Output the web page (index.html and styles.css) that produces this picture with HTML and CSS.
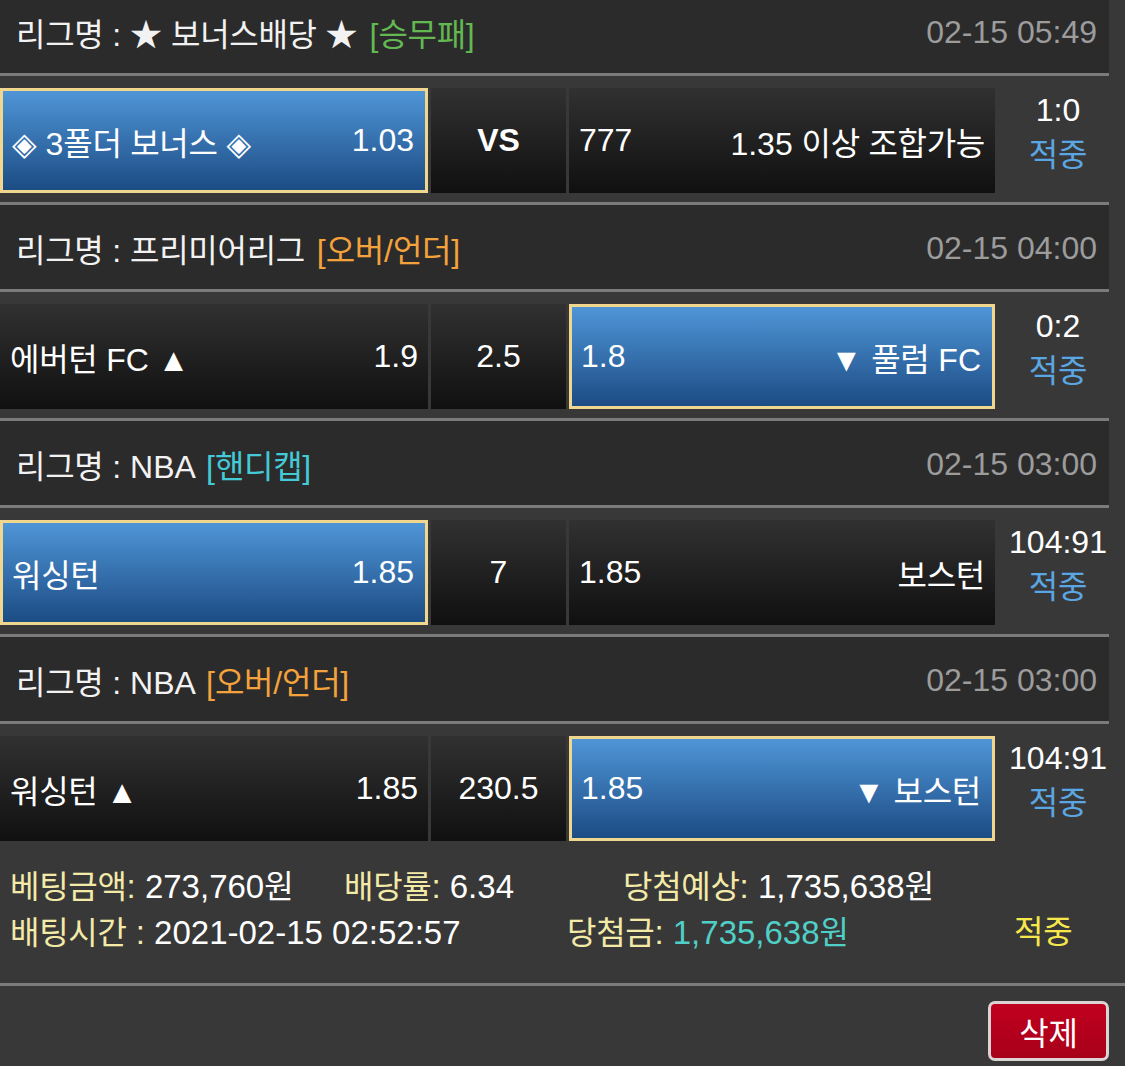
FILE: index.html
```html
<!DOCTYPE html>
<html lang="ko">
<head>
<meta charset="utf-8">
<title>배팅내역</title>
<link rel="stylesheet" href="styles.css">
</head>
<body>
<div class="slip">
  <div class="game">
    <div class="league">
      <span class="name"><span class="k">리그명</span> : ★ <span class="k">보너스배당</span> ★ <span class="tag green">[<span class="k">승무패</span>]</span></span>
      <span class="date">02-15 05:49</span>
    </div>
    <div class="match">
      <div class="cell sel"><span>◈ 3<span class="k">폴더 보너스</span> ◈</span><span>1.03</span></div>
      <div class="cell mid"><b>VS</b></div>
      <div class="cell"><span>777</span><span>1.35 <span class="k">이상 조합가능</span></span></div>
      <div class="score"><div>1:0</div><div class="hit k">적중</div></div>
    </div>
  </div>
  <div class="game">
    <div class="league">
      <span class="name"><span class="k">리그명</span> : <span class="k">프리미어리그</span> <span class="tag orange">[<span class="k">오버</span>/<span class="k">언더</span>]</span></span>
      <span class="date">02-15 04:00</span>
    </div>
    <div class="match">
      <div class="cell"><span><span class="k">에버턴</span> FC ▲</span><span>1.9</span></div>
      <div class="cell mid">2.5</div>
      <div class="cell sel"><span>1.8</span><span>▼ <span class="k">풀럼</span> FC</span></div>
      <div class="score"><div>0:2</div><div class="hit k">적중</div></div>
    </div>
  </div>
  <div class="game">
    <div class="league">
      <span class="name"><span class="k">리그명</span> : NBA <span class="tag cyan">[<span class="k">핸디캡</span>]</span></span>
      <span class="date">02-15 03:00</span>
    </div>
    <div class="match">
      <div class="cell sel"><span class="k">워싱턴</span><span>1.85</span></div>
      <div class="cell mid">7</div>
      <div class="cell"><span>1.85</span><span class="k">보스턴</span></div>
      <div class="score"><div>104:91</div><div class="hit k">적중</div></div>
    </div>
  </div>
  <div class="game last">
    <div class="league">
      <span class="name"><span class="k">리그명</span> : NBA <span class="tag orange">[<span class="k">오버</span>/<span class="k">언더</span>]</span></span>
      <span class="date">02-15 03:00</span>
    </div>
    <div class="match">
      <div class="cell"><span><span class="k">워싱턴</span> ▲</span><span>1.85</span></div>
      <div class="cell mid">230.5</div>
      <div class="cell sel"><span>1.85</span><span>▼ <span class="k">보스턴</span></span></div>
      <div class="score"><div>104:91</div><div class="hit k">적중</div></div>
    </div>
  </div>
</div>
<div class="summary">
  <div class="sum-row">
    <span class="s1"><span class="lbl"><span class="k">베팅금액</span>:</span> 273,760<span class="k">원</span></span>
    <span class="s2"><span class="lbl"><span class="k">배당률</span>:</span> 6.34</span>
    <span><span class="lbl"><span class="k">당첨예상</span>:</span> 1,735,638<span class="k">원</span></span>
  </div>
  <div class="sum-row">
    <span class="t1"><span class="lbl"><span class="k">배팅시간</span> :</span> 2021-02-15 02:52:57</span>
    <span class="t2"><span class="lbl"><span class="k">당첨금</span>:</span> <span class="win">1,735,638<span class="k">원</span></span></span>
    <span class="result k">적중</span>
  </div>
</div>
<div class="actions">
  <button class="del"><span class="k">삭제</span></button>
</div>
</body>
</html>
```

FILE: styles.css
```css
* { box-sizing: border-box; }

html, body {
  margin: 0;
  padding: 0;
  background: #383838;
}

body {
  font-family: "Liberation Sans", "Noto Sans CJK KR", "DejaVu Sans", sans-serif;
  font-size: 32px;
  color: #ffffff;
  overflow: hidden;
}

.k {
  font-size: 32px;
  letter-spacing: -0.3px;
}

.slip {
  width: 1109px;
  margin-top: -11px;
}

.game {
  border-bottom: 3px solid #7b7b7b;
}

.game.last {
  border-bottom: none;
}

.league {
  height: 87px;
  background: #2b2b2b;
  border-bottom: 3px solid #7b7b7b;
  display: flex;
  align-items: center;
  justify-content: space-between;
  padding: 2px 12px 0 16px;
  color: #f2f2f2;
}

.tag { margin-left: 3px; }
.green { color: #64b852; }
.orange { color: #f3a23c; }
.cyan { color: #44c9d6; }

.date {
  color: #9c9c9c;
}

.match {
  display: flex;
  gap: 3px;
  padding: 12px 0 9px;
}

.cell {
  height: 105px;
  width: 426px;
  display: flex;
  align-items: center;
  justify-content: space-between;
  padding: 0 10px;
  background: linear-gradient(#313131, #101010);
  white-space: nowrap;
}

.match .cell:first-child {
  width: 428px;
}

.cell.mid {
  width: 135px;
  justify-content: center;
  padding: 0;
}

.cell.mid b {
  font-weight: bold;
}

.cell.sel {
  border: 3px solid #f1d78e;
  background: linear-gradient(#4f95d7, #1c4c84);
  padding: 0 11px 0 9px;
}

.score {
  width: 114px;
  margin-left: -3px;
  padding-left: 12px;
  text-align: center;
  line-height: 45px;
}

.hit {
  color: #5ba6e2;
}

.summary {
  width: 1125px;
  padding: 14px 0 27px 10px;
  border-bottom: 3px solid #7b7b7b;
  line-height: 45px;
  font-size: 33px;
  color: #ffffff;
}

.sum-row {
  display: flex;
  white-space: nowrap;
}

.s1 { width: 334px; }
.s2 { width: 279px; }
.t1 { width: 557px; }
.t2 { width: 447px; }

.lbl { color: #f3eaa8; }
.win { color: #4fcfc6; }
.result { color: #f6e84c; }

.actions {
  display: flex;
  justify-content: flex-end;
  padding: 15px 16px 0 0;
}

.del {
  width: 121px;
  height: 60px;
  border: 3px solid #dcd3d5;
  border-radius: 7px;
  background: linear-gradient(#c0001f, #a8001a);
  color: #ffffff;
  font-family: inherit;
  font-size: 32px;
  padding: 0;
  display: flex;
  align-items: center;
  justify-content: center;
}
```
